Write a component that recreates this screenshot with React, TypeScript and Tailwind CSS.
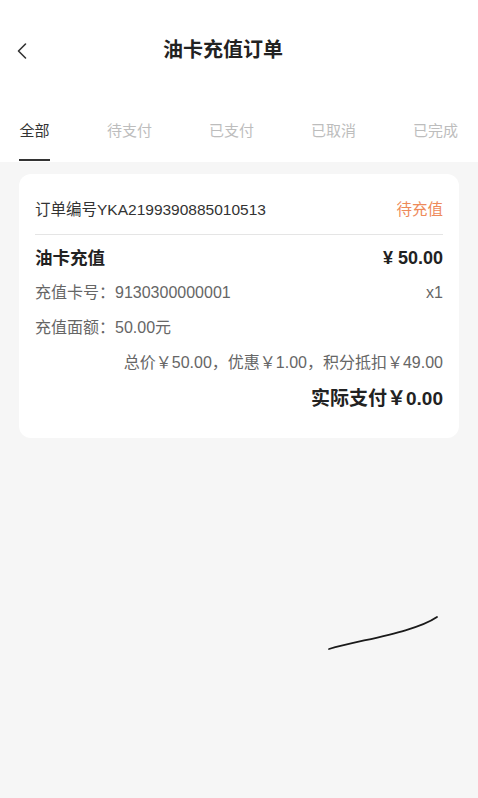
import React from 'react';

const tabs = ['全部', '待支付', '已支付', '已取消', '已完成'];

export default function App() {
  return (
    <div
      className="relative w-[478px] h-[798px] bg-[#f6f6f6] overflow-hidden"
      style={{ fontFamily: '"Liberation Sans", "Noto Sans CJK SC", sans-serif' }}
    >
      <div className="bg-white">
        <div className="relative h-[102px] flex items-center justify-center">
          <svg className="absolute left-[16px] top-[42px]" width="12" height="18" viewBox="0 0 12 18" fill="none">
            <path d="M9.5 2 L2.5 9 L9.5 16" stroke="#333" strokeWidth="1.6" strokeLinecap="round" strokeLinejoin="round" />
          </svg>
          <h1 className="text-[20px] font-bold text-[#222] -mt-[2px] mr-[32px]">油卡充值订单</h1>
        </div>
        <div className="flex items-start h-[60px] px-[19px] justify-between pr-[20px]">
          {tabs.map((t, i) => (
            <div key={t} className="flex flex-col items-center">
              <span className={`text-[15px] leading-[22px] mt-[18px] ${i === 0 ? 'text-[#333]' : 'text-[#bdbdbd]'}`}>{t}</span>
              <div className={`mt-[17px] h-[2px] w-[31px] ${i === 0 ? 'bg-[#333]' : 'bg-transparent'}`} />
            </div>
          ))}
        </div>
      </div>

      <div className="mx-[19px] mt-[12px] bg-white rounded-[12px] px-[16px] pt-[24px] pb-[27px]">
        <div className="flex justify-between items-center pb-[12px] border-b border-[#e5e5e5]">
          <span className="text-[15.5px] leading-[24px] text-[#333]">订单编号YKA2199390885010513</span>
          <span className="text-[15.5px] leading-[24px] text-[#ee8a5a]">待充值</span>
        </div>
        <div className="flex justify-between items-center mt-[11px]">
          <span className="text-[17.5px] leading-[24px] font-bold text-[#222]">油卡充值</span>
          <span className="text-[18px] leading-[24px] font-bold text-[#222]">¥ 50.00</span>
        </div>
        <div className="flex justify-between items-center mt-[11px]">
          <span className="text-[16px] leading-[24px] text-[#666]">充值卡号：9130300000001</span>
          <span className="text-[16px] leading-[24px] text-[#666]">x1</span>
        </div>
        <div className="mt-[11px] text-[16px] leading-[24px] text-[#666]">充值面额：50.00元</div>
        <div className="mt-[11px] text-right text-[16px] leading-[24px] text-[#666]">总价￥50.00，优惠￥1.00，积分抵扣￥49.00</div>
        <div className="mt-[12px] text-right text-[19px] leading-[24px] font-bold text-[#222]">实际支付￥0.00</div>
      </div>

      <svg className="absolute left-[325px] top-[612px]" width="118" height="42" viewBox="0 0 118 42" fill="none">
        <path d="M4 37 C40 27 90 20 112 5" stroke="#1a1a1a" strokeWidth="1.8" strokeLinecap="round" />
      </svg>
    </div>
  );
}
